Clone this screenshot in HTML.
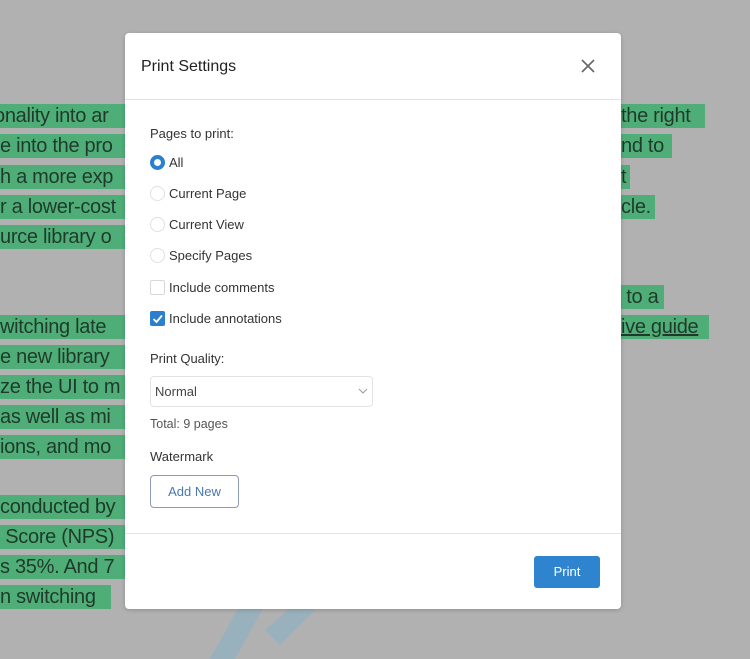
<!DOCTYPE html>
<html><head><style>
*{margin:0;padding:0;box-sizing:border-box}
body{width:750px;height:659px;background:#b1b1b1;position:relative;overflow:hidden;font-family:"Liberation Sans",sans-serif}
.hl{position:absolute;background:#4fae78;color:#1f3a2a;font-size:20px;line-height:24px;height:24px;white-space:nowrap;letter-spacing:-0.3px}
.m{position:absolute;left:125px;top:33px;width:496px;height:576px;background:#fff;border-radius:4px;box-shadow:0 1px 4px rgba(0,0,0,.2)}
.t{position:absolute;color:#333;font-size:13px;white-space:nowrap}
.rad{position:absolute;width:15px;height:15px;border-radius:50%;border:1px solid #e0e0e0}
.cb{position:absolute;width:15px;height:15px;border-radius:2px;border:1px solid #d8d8d8}
</style></head><body>
<div class="hl" style="left:0;top:104px;width:125px;text-indent:-6px">onality into ar</div>
<div class="hl" style="left:0;top:134px;width:125px">e into the pro</div>
<div class="hl" style="left:0;top:165px;width:125px">h a more exp</div>
<div class="hl" style="left:0;top:195px;width:125px">r a lower-cost</div>
<div class="hl" style="left:0;top:225px;width:125px">urce library o</div>
<div class="hl" style="left:0;top:315px;width:125px">witching late</div>
<div class="hl" style="left:0;top:345px;width:125px">e new library</div>
<div class="hl" style="left:0;top:375px;width:125px">ze the UI to m</div>
<div class="hl" style="left:0;top:405px;width:125px">as well as mi</div>
<div class="hl" style="left:0;top:435px;width:125px">ions, and mo</div>
<div class="hl" style="left:0;top:495px;width:125px">conducted by</div>
<div class="hl" style="left:0;top:525px;width:125px">&nbsp;Score (NPS)</div>
<div class="hl" style="left:0;top:555px;width:125px">s 35%. And 7</div>
<div class="hl" style="left:0;top:585px;width:111px">n switching</div>
<div class="hl" style="left:621px;top:104px;width:84px">the right</div>
<div class="hl" style="left:621px;top:134px;width:51px">nd to</div>
<div class="hl" style="left:621px;top:165px;width:9px">t</div>
<div class="hl" style="left:621px;top:195px;width:34px">cle.</div>
<div class="hl" style="left:621px;top:285px;width:43px">&nbsp;to a</div>
<div class="hl" style="left:621px;top:315px;width:88px;text-decoration:underline">ive guide</div>
<svg style="position:absolute;left:170px;top:590px" width="160" height="69"><path d="M40 69 L70 15 L95 15 L65 69Z M95 40 L130 10 L145 20 L110 55Z" fill="#8fb0c0" opacity=".7"/></svg>
<div class="m">
 <div class="t" style="left:16px;top:25px;font-size:16px;color:#222">Print Settings</div>
 <svg style="position:absolute;left:456px;top:26px" width="14" height="14"><path d="M1 1L13 13M13 1L1 13" stroke="#666" stroke-width="1.6"/></svg>
 <div style="position:absolute;left:0;right:0;top:66px;height:1px;background:#e3e3e3"></div>
 <div class="t" style="left:25px;top:93px">Pages to print:</div>
 <div class="rad" style="left:25px;top:122px;border:4px solid #2a7fcf"></div><div class="t" style="left:44px;top:122px">All</div>
 <div class="rad" style="left:25px;top:153px"></div><div class="t" style="left:44px;top:153px">Current Page</div>
 <div class="rad" style="left:25px;top:184px"></div><div class="t" style="left:44px;top:184px">Current View</div>
 <div class="rad" style="left:25px;top:215px"></div><div class="t" style="left:44px;top:215px">Specify Pages</div>
 <div class="cb" style="left:25px;top:247px"></div><div class="t" style="left:44px;top:247px">Include comments</div>
 <div class="cb" style="left:25px;top:278px;background:#2a7fcf;border-color:#2a7fcf"><svg width="13" height="13" style="position:absolute;left:0;top:0"><path d="M2.5 7L5.5 10L11 3.5" stroke="#fff" stroke-width="1.8" fill="none"/></svg></div><div class="t" style="left:44px;top:278px">Include annotations</div>
 <div class="t" style="left:25px;top:318px">Print Quality:</div>
 <div style="position:absolute;left:25px;top:343px;width:223px;height:31px;border:1px solid #e2e2e2;border-radius:4px"></div>
 <div class="t" style="left:30px;top:351px;color:#444">Normal</div>
 <svg style="position:absolute;left:233px;top:355px" width="10" height="6"><path d="M1 1L5 5L9 1" stroke="#999" fill="none"/></svg>
 <div class="t" style="left:25px;top:384px;color:#555;font-size:12.5px">Total: 9 pages</div>
 <div class="t" style="left:25px;top:416px">Watermark</div>
 <div style="position:absolute;left:25px;top:442px;width:89px;height:33px;border:1px solid #8a9bb0;border-radius:4px;color:#4a78b0;font-size:13px;text-align:center;line-height:31px">Add New</div>
 <div style="position:absolute;left:0;right:0;top:500px;height:1px;background:#e3e3e3"></div>
 <div style="position:absolute;left:409px;top:523px;width:66px;height:32px;background:#2f84d0;border-radius:3px;color:#fff;font-size:13px;text-align:center;line-height:32px">Print</div>
</div>
</body></html>
